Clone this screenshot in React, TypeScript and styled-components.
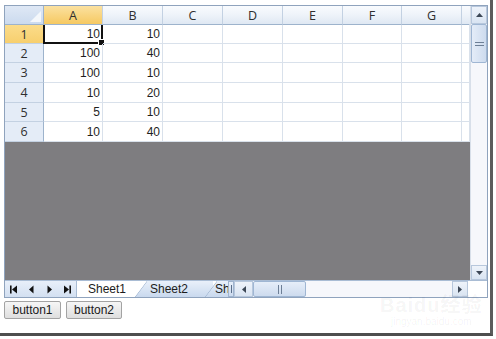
import React from "react";
import styled, { createGlobalStyle, css } from "styled-components";

const Global = createGlobalStyle`
  html, body { margin: 0; padding: 0; background: #ffffff; }
  body { font-family: "Liberation Sans", Arial, sans-serif; }
`;

const Frame = styled.div`
  position: relative;
  width: 493px;
  height: 336px;
  border-right: 3px solid #5c5c5c;
  border-bottom: 3px solid #4e4e4e;
  background: #ffffff;
  padding: 5px 0 0 4px;
  box-sizing: border-box;
  overflow: hidden;
`;

const Control = styled.div`
  width: 484px;
  height: 293px;
  border: 1px solid #8fa3bd;
  box-sizing: border-box;
  display: flex;
  flex-direction: column;
  background: #ffffff;
`;

const TopArea = styled.div`
  display: flex;
  height: 274px;
`;

const SheetArea = styled.div`
  width: 465px;
  display: flex;
  flex-direction: column;
  background: #7e7d80;
`;

const colWidths = [39, 59, 60, 60, 60, 60, 59, 60, 8];
const rowHeights = [19, 19, 19, 20, 20, 19, 20];

const Grid = styled.div`
  display: grid;
  grid-template-columns: ${colWidths.map((w) => w + "px").join(" ")};
  grid-template-rows: ${rowHeights.map((h) => h + "px").join(" ")};
  background: #ffffff;
`;

const HeaderCell = styled.div<{ $sel?: boolean; $last?: boolean }>`
  box-sizing: border-box;
  border-right: 1px solid ${(p) => (p.$last ? "transparent" : "#c3d1e2")};
  border-bottom: 1px solid #9db3cc;
  background: ${(p) =>
    p.$sel
      ? "linear-gradient(#fbe1a0, #f6c962)"
      : "linear-gradient(#f9fbfe 0%, #eef3f9 50%, #dfe8f3 100%)"};
  display: flex;
  align-items: center;
  justify-content: center;
  font-family: "Open Sans", "Liberation Sans", sans-serif;
  font-size: 12.5px;
  color: #2f2f2f;
  padding-top: 1px;
`;

const Corner = styled.div`
  box-sizing: border-box;
  position: relative;
  border-right: 1px solid #9db3cc;
  border-bottom: 1px solid #9db3cc;
  background: linear-gradient(#dfe8f5, #cbdaee);
`;

const CornerTri = styled.svg`
  position: absolute;
  right: 2px;
  bottom: 2px;
`;

const RowHeader = styled.div<{ $sel?: boolean }>`
  box-sizing: border-box;
  border-right: 1px solid #9db3cc;
  border-bottom: 1px solid #c3d1e2;
  background: ${(p) => (p.$sel ? "linear-gradient(#fbdc8a, #f7cf6e)" : "#e4ecf7")};
  display: flex;
  align-items: center;
  justify-content: center;
  font-family: "Open Sans", "Liberation Sans", sans-serif;
  font-size: 12.5px;
  color: #2f2f2f;
`;

const Cell = styled.div<{ $active?: boolean }>`
  box-sizing: border-box;
  position: relative;
  border-right: 1px solid #d9e1eb;
  border-bottom: 1px solid #d9e1eb;
  display: flex;
  align-items: center;
  justify-content: flex-end;
  padding-right: 2px;
  font-family: "Liberation Sans", Arial, sans-serif;
  font-size: 12px;
  color: #1f1f1f;
  ${(p) =>
    p.$active &&
    css`
      border: 2px solid #111;
      border-top: none;
      margin-left: -1px;
      padding-right: 1px;
    `}
`;

const Handle = styled.span`
  position: absolute;
  right: -4px;
  bottom: -4px;
  width: 5px;
  height: 5px;
  background: #111;
  border: 1px solid #fff;
`;

const VScroll = styled.div`
  width: 17px;
  display: flex;
  flex-direction: column;
  background: #f6f7fb;
  border-left: 1px solid #d8dfe9;
  box-sizing: border-box;
`;

const ArrowBtn = styled.div<{ $h: number; $w?: number }>`
  height: ${(p) => p.$h}px;
  width: ${(p) => (p.$w ? p.$w + "px" : "auto")};
  flex: none;
  box-sizing: border-box;
  display: flex;
  align-items: center;
  justify-content: center;
  background: linear-gradient(#eef3fa, #d9e4f2);
  border: 1px solid #b7c7dc;
`;

const VThumb = styled.div`
  height: 39px;
  flex: none;
  box-sizing: border-box;
  border: 1px solid #9fb6d3;
  border-radius: 2px;
  background: linear-gradient(90deg, #e4ecf8, #cddbee);
  display: flex;
  align-items: center;
  justify-content: center;
`;

const Track = styled.div`
  flex: 1;
`;

const TabBar = styled.div`
  height: 17px;
  display: flex;
  border-top: 1px solid #a9bcd4;
  box-sizing: border-box;
  background: #ffffff;
`;

const Nav = styled.div`
  width: 72px;
  display: flex;
  background: linear-gradient(#e8eff9, #d3e0f1);
  border-right: 1px solid #a9bcd4;
  box-sizing: border-box;
`;

const NavBtn = styled.div`
  width: 18px;
  display: flex;
  align-items: center;
  justify-content: center;
`;

const Tabs = styled.div`
  width: 151px;
  display: flex;
  overflow: hidden;
`;

const Tab = styled.div<{ $active?: boolean; $w: number; $pad?: number }>`
  position: relative;
  flex: none;
  width: ${(p) => p.$w}px;
  box-sizing: border-box;
  font-family: "Liberation Sans", Arial, sans-serif;
  font-size: 12px;
  color: #1c1c1c;
  line-height: 16px;
  white-space: nowrap;
  overflow: hidden;
  ${(p) =>
    p.$active
      ? css`
          background: #ffffff;
          padding-left: 11px;
        `
      : css`
          margin-left: -8px;
          padding-left: ${p.$pad ?? 15}px;
          background: linear-gradient(#e9f0fa, #c9d9ee);
          clip-path: polygon(12px 0, 100% 0, 100% 100%, 0 100%);
          &::before {
            content: "";
            position: absolute;
            left: 0;
            top: 0;
            width: 12px;
            height: 100%;
            background: linear-gradient(
              to top left,
              transparent calc(50% - 0.8px),
              #8ea6c4 50%,
              transparent calc(50% + 0.8px)
            );
          }
        `}
`;

const Splitter = styled.div`
  width: 6px;
  box-sizing: border-box;
  border: 1px solid #9fb4cf;
  background: linear-gradient(#e6eef9, #ccdaee);
  display: flex;
  align-items: center;
  justify-content: center;
  &::after {
    content: "";
    width: 1px;
    height: 8px;
    background: #5a6f8a;
  }
`;

const HScroll = styled.div`
  width: 234px;
  display: flex;
  background: #f6f7fb;
`;

const HThumb = styled.div`
  width: 53px;
  box-sizing: border-box;
  border: 1px solid #9fb6d3;
  border-radius: 2px;
  background: linear-gradient(#e6eef9, #cddbee);
  display: flex;
  align-items: center;
  justify-content: center;
`;

const CornerBox = styled.div`
  flex: 1;
  background: #ffffff;
`;

const Buttons = styled.div`
  display: flex;
  gap: 5px;
  margin-top: 3px;
`;

const Button = styled.button<{ $w: number }>`
  width: ${(p) => p.$w}px;
  height: 18px;
  padding: 0;
  box-sizing: border-box;
  border: 1px solid #a3a3a3;
  border-radius: 2px;
  background: linear-gradient(#f6f6f6, #dedede);
  font-family: "Liberation Sans", Arial, sans-serif;
  font-size: 12px;
  color: #1a1a1a;
  line-height: 14px;
`;

const Watermark = styled.div`
  position: absolute;
  left: 380px;
  top: 293px;
  color: rgba(0, 0, 0, 0.05);
  font-family: "Liberation Sans", "Noto Sans CJK SC", sans-serif;
  display: flex;
  flex-direction: column;
  align-items: center;
  pointer-events: none;
`;

const WmBig = styled.span`
  font-size: 20px;
  font-weight: bold;
  letter-spacing: 1px;
  line-height: 24px;
`;

const WmSmall = styled.span`
  font-size: 10px;
  line-height: 10px;
`;

const Tri = ({ dir }: { dir: "up" | "down" | "left" | "right" }) => {
  const pts =
    dir === "up"
      ? "0,4 7,4 3.5,0"
      : dir === "down"
      ? "0,0 7,0 3.5,4"
      : dir === "left"
      ? "4,0 4,7 0,3.5"
      : "0,0 0,7 4,3.5";
  const w = dir === "up" || dir === "down" ? 7 : 4;
  const h = dir === "up" || dir === "down" ? 4 : 7;
  return (
    <svg width={w} height={h} viewBox={`0 0 ${w} ${h}`}>
      <polygon points={pts} fill="#3c4756" />
    </svg>
  );
};

const NavIcon = ({ kind }: { kind: "first" | "prev" | "next" | "last" }) => (
  <svg width="9" height="9" viewBox="0 0 9 9">
    {kind === "first" && (
      <>
        <rect x="1" y="0.5" width="1.6" height="8" fill="#111" />
        <polygon points="8,0.5 8,8.5 3,4.5" fill="#111" />
      </>
    )}
    {kind === "prev" && <polygon points="6.5,0.5 6.5,8.5 2,4.5" fill="#111" />}
    {kind === "next" && <polygon points="2.5,0.5 2.5,8.5 7,4.5" fill="#111" />}
    {kind === "last" && (
      <>
        <polygon points="1,0.5 1,8.5 6,4.5" fill="#111" />
        <rect x="6.4" y="0.5" width="1.6" height="8" fill="#111" />
      </>
    )}
  </svg>
);

const cols = ["A", "B", "C", "D", "E", "F", "G", ""];
const data: [string, string][] = [
  ["10", "10"],
  ["100", "40"],
  ["100", "10"],
  ["10", "20"],
  ["5", "10"],
  ["10", "40"],
];

export default function App() {
  return (
    <>
      <Global />
      <Frame>
        <Control>
          <TopArea>
            <SheetArea>
              <Grid>
                <Corner>
                  <CornerTri width="11" height="11" viewBox="0 0 11 11">
                    <polygon points="11,0 11,11 0,11" fill="#f4f7fb" />
                  </CornerTri>
                </Corner>
                {cols.map((c, i) => (
                  <HeaderCell key={"h" + i} $sel={c === "A"} $last={c === ""}>
                    {c}
                  </HeaderCell>
                ))}
                {data.map((row, r) => (
                  <React.Fragment key={"r" + r}>
                    <RowHeader $sel={r === 0}>{r + 1}</RowHeader>
                    <Cell $active={r === 0}>
                      {row[0]}
                      {r === 0 && <Handle />}
                    </Cell>
                    <Cell>{row[1]}</Cell>
                    <Cell />
                    <Cell />
                    <Cell />
                    <Cell />
                    <Cell />
                    <Cell />
                  </React.Fragment>
                ))}
              </Grid>
            </SheetArea>
            <VScroll>
              <ArrowBtn $h={18}>
                <Tri dir="up" />
              </ArrowBtn>
              <VThumb>
                <svg width="9" height="4" viewBox="0 0 9 4">
                  <rect x="0" y="0" width="9" height="1" fill="#6d7f96" />
                  <rect x="0" y="3" width="9" height="1" fill="#6d7f96" />
                </svg>
              </VThumb>
              <Track />
              <ArrowBtn $h={15}>
                <Tri dir="down" />
              </ArrowBtn>
            </VScroll>
          </TopArea>
          <TabBar>
            <Nav>
              <NavBtn>
                <NavIcon kind="first" />
              </NavBtn>
              <NavBtn>
                <NavIcon kind="prev" />
              </NavBtn>
              <NavBtn>
                <NavIcon kind="next" />
              </NavBtn>
              <NavBtn>
                <NavIcon kind="last" />
              </NavBtn>
            </Nav>
            <Tabs>
              <Tab $active $w={66}>
                Sheet1
              </Tab>
              <Tab $w={78}>Sheet2</Tab>
              <Tab $w={30} $pad={10}>
                Sh
              </Tab>
            </Tabs>
            <Splitter />
            <HScroll>
              <ArrowBtn $h={16} $w={19}>
                <Tri dir="left" />
              </ArrowBtn>
              <HThumb>
                <svg width="4" height="9" viewBox="0 0 4 9">
                  <rect x="0" y="0" width="1" height="9" fill="#6d7f96" />
                  <rect x="3" y="0" width="1" height="9" fill="#6d7f96" />
                </svg>
              </HThumb>
              <Track />
              <ArrowBtn $h={16} $w={16}>
                <Tri dir="right" />
              </ArrowBtn>
            </HScroll>
            <CornerBox />
          </TabBar>
        </Control>
        <Buttons>
          <Button $w={57}>button1</Button>
          <Button $w={56}>button2</Button>
        </Buttons>
        <Watermark>
          <WmBig>Baidu经验</WmBig>
          <WmSmall>jingyan.baidu.com</WmSmall>
        </Watermark>
      </Frame>
    </>
  );
}
